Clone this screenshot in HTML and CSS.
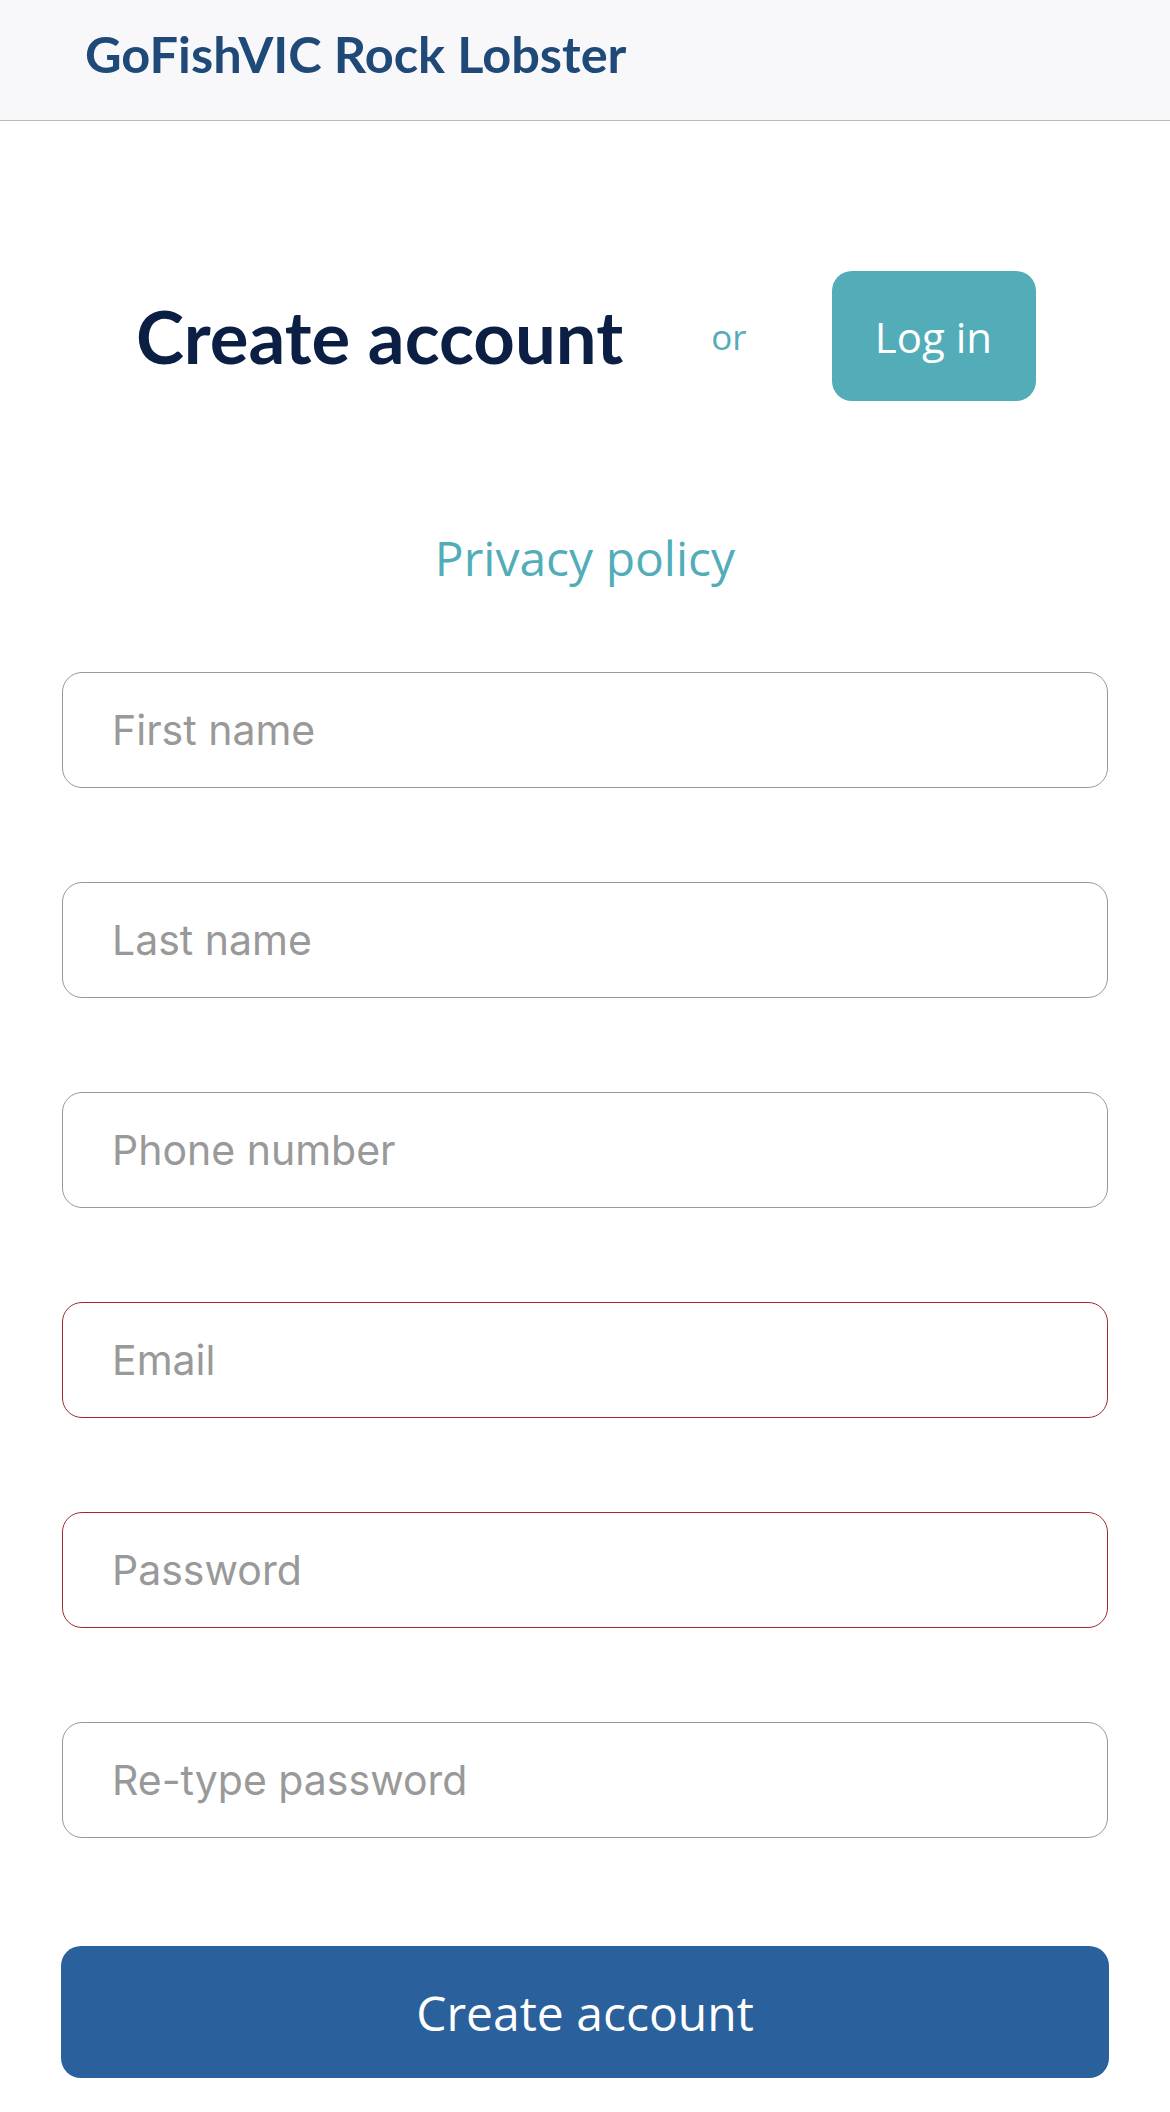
FILE: index.html
```html
<!DOCTYPE html>
<html>

<head>
  <title>GoFishVIC Rock Lobster - Create account</title>
  <link rel="stylesheet" href="styles.css">
</head>

<body>

  <div class="topbar">
    <span class="brand">GoFishVIC Rock Lobster</span>
  </div>

  <div class="page">
    <div class="title-row">
      <h1>Create account</h1>
      <span class="or">or</span>
      <a class="login-btn" href="#">Log in</a>
    </div>

    <p class="privacy"><a href="#">Privacy policy</a></p>

    <form class="signup">
      <input type="text" name="first_name" placeholder="First name">
      <input type="text" name="last_name" placeholder="Last name">
      <input type="tel" name="phone" placeholder="Phone number">
      <input type="email" name="email" class="invalid" placeholder="Email">
      <input type="password" name="password" class="invalid" placeholder="Password">
      <input type="password" name="password2" placeholder="Re-type password">
      <button type="submit" class="submit-btn">Create account</button>
    </form>
  </div>

</body>

</html>
```

FILE: styles.css
```css
body {
  margin: 0;
  background: white;
  font-family: "Open Sans", sans-serif;
}

.topbar {
  height: 120px;
  background-color: #f8f8fb;
  border-bottom: 1px solid #b9b9bc;
  display: flex;
  align-items: center;
  padding-left: 85px;
  box-sizing: content-box;
}

.brand {
  font-family: Lato, sans-serif;
  font-weight: 700;
  font-size: 50.5px;
  color: #1f4a78;
  margin-top: -14px;
}

.page {
  padding: 0 62px;
}

.title-row {
  display: flex;
  align-items: center;
  margin-top: 150px;
  padding-left: 74px;
}

h1 {
  margin: 0;
  font-family: Lato, sans-serif;
  font-weight: 700;
  font-size: 72.5px;
  color: #0b1f45;
  line-height: 1;
}

.or {
  margin-left: 88px;
  font-size: 35px;
  color: #52adb8;
}

.login-btn {
  margin-left: 85px;
  width: 204px;
  height: 130px;
  border-radius: 20px;
  background-color: #52adb8;
  color: white;
  font-size: 42px;
  text-decoration: none;
  display: flex;
  align-items: center;
  justify-content: center;
}

.privacy {
  text-align: center;
  margin: 126px 0 0;
  line-height: 62px;
}

.privacy a {
  color: #52adb8;
  font-size: 48px;
  text-decoration: none;
}

.signup {
  display: flex;
  flex-direction: column;
  gap: 94px;
  margin-top: 71px;
}

.signup input {
  height: 116px;
  width: 100%;
  box-sizing: border-box;
  border: 1.5px solid #989899;
  border-radius: 20px;
  padding: 0 49px;
  font-family: Inter, sans-serif;
  font-size: 41px;
  color: #222;
  background: white;
  outline: none;
}

.signup input::placeholder {
  color: #999999;
}

.signup input.invalid {
  border-color: #9e2a30;
}

.submit-btn {
  height: 132px;
  margin: 14px -1px 0;
  border: none;
  border-radius: 20px;
  background-color: #2a609b;
  color: white;
  font-family: "Open Sans", sans-serif;
  font-size: 48px;
  cursor: pointer;
}
```
